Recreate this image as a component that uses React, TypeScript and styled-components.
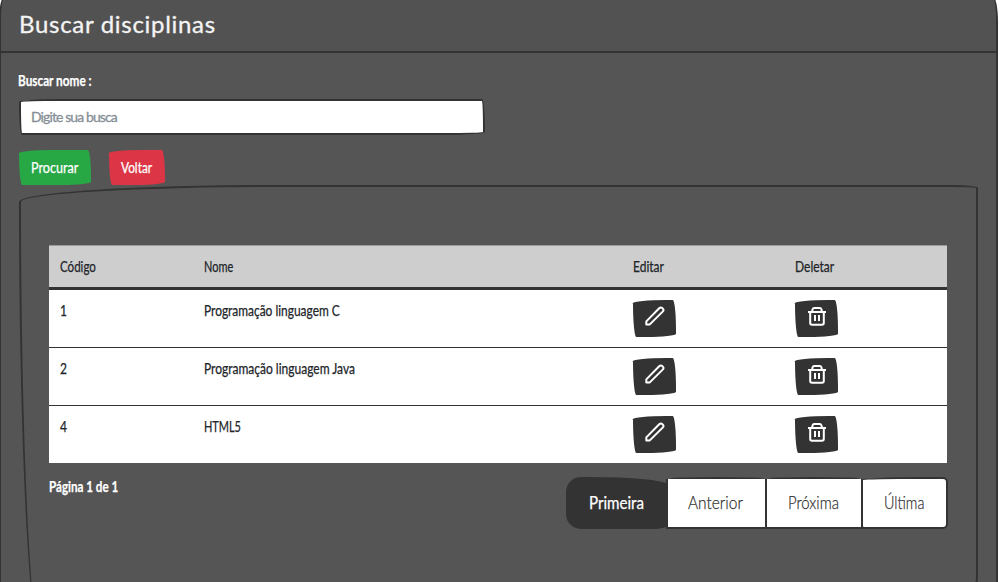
import React from "react";
import styled, { createGlobalStyle } from "styled-components";

const ink = "#333";
const wobble = "255px 25px 225px 25px / 25px 225px 25px 255px";

const GlobalStyle = createGlobalStyle`
  * { box-sizing: border-box; }
  html, body { margin: 0; background: #fff; }
  body { font-family: Lato, sans-serif; font-size: 16px; line-height: 24px; color: #212529; }
`;

const Viewport = styled.div`
  height: 582px;
  overflow: hidden;
`;

/* Narrow lettering: the glyphs are squeezed inside a box of the final width. */
const Label = styled.span<{ $w: number; $x?: number; $size?: number; $bold?: boolean }>`
  display: block;
  flex: none;
  width: ${(p) => p.$w}px;
  font-size: ${(p) => p.$size ?? 15}px;
  ${(p) => (p.$bold ? "font-weight: 700;" : "")}
  white-space: nowrap;
  -webkit-text-stroke: 0.25px currentColor;
  transform: translateY(-1px) scaleX(${(p) => p.$x ?? 0.8});
  transform-origin: left center;
`;

const Card = styled.main`
  width: 999px;
  height: 700px;
  margin: -3px 0 0 -1px;
  border: 2px solid ${ink};
  border-radius: 5px 5px 5px 5px / 25px 25px 25px 5px;
  background: #555;
  overflow: hidden;
`;

const Header = styled.header`
  height: 54px;
  padding: 11px 18px 0;
  border-bottom: 2px solid ${ink};
  background: #525252;
`;

const Title = styled.h1`
  margin: 0;
  color: #f4f4f4;
  font-size: 24px;
  line-height: 28px;
  font-weight: 400;
  letter-spacing: 0.7px;
  -webkit-text-stroke: 0.3px #f4f4f4;
`;

const Body = styled.div`
  padding: 16px 18px 0 17px;
  color: #fff;
`;

const SearchInput = styled.input`
  display: block;
  width: 466px;
  height: 36px;
  margin: 6px 0 15px 1px;
  padding: 0 10px 1px;
  border: 2px solid ${ink};
  border-radius: 40px 3px 40px 3px / 3px 30px 3px 30px;
  background: #fff;
  font: 14px Lato, sans-serif;
  letter-spacing: -0.9px;
  color: ${ink};
  &::placeholder { color: #868e96; opacity: 1; -webkit-text-stroke: 0.3px #868e96; }
`;

const Actions = styled.div`
  display: flex;
  gap: 18px;
  padding-left: 1px;
`;

const Button = styled.button<{ $bg: string; $w: number; $h?: number }>`
  display: flex;
  justify-content: flex-start;
  align-items: center;
  width: ${(p) => p.$w}px;
  height: ${(p) => p.$h ?? 35}px;
  padding: 0 0 0 12px;
  border: 0;
  border-radius: ${wobble};
  background: ${(p) => p.$bg};
  color: #fff;
  font-family: inherit;
`;

const Panel = styled.section`
  height: 472px;
  margin-left: 1px;
  padding: 58px 29px 0 28px;
  border: 2px solid ${ink};
  border-radius: 255px 25px 225px 25px / 17px 3px 80px 455px;
`;

const Table = styled.div`
  color: #212529;
  background: #fff;
`;

const columns = "144px 429px 162px 1fr";

const HeadRow = styled.div`
  display: grid;
  grid-template-columns: ${columns};
  height: 45px;
  padding: 9px 0 0 11px;
  border-top: 1px solid #999;
  border-bottom: 3px solid ${ink};
  background: #cecece;
`;

const Row = styled.div`
  display: grid;
  grid-template-columns: ${columns};
  height: 58px;
  padding: 10px 0 0 11px;
  border-bottom: 1px solid ${ink};
  &:last-child { height: 57px; border-bottom: 0; }
  & > span { margin-top: -1px; }
`;

const IconSvg = styled.svg`
  display: block;
  margin-bottom: 5px;
`;

const Footer = styled.footer`
  display: flex;
  justify-content: space-between;
  align-items: flex-start;
  padding-top: 12px;
`;

const Pager = styled.nav`
  display: flex;
  margin: 2px -1px 0 0;
`;

const PageLink = styled.button<{ $w: number; $active?: boolean; $r: string; $pad: number }>`
  display: flex;
  align-items: center;
  width: ${(p) => p.$w}px;
  height: 52px;
  margin-right: -2px;
  padding: 0 0 0 ${(p) => p.$pad}px;
  border: 2px solid ${ink};
  border-radius: ${(p) => p.$r};
  background: ${(p) => (p.$active ? ink : "#fff")};
  color: ${(p) => (p.$active ? "#fff" : ink)};
  font-family: inherit;
  font-weight: ${(p) => (p.$active ? 400 : 300)};
  &:last-child { margin-right: 0; }
`;

const Pencil = () => (
  <IconSvg width="20" height="20" viewBox="0 0 20 20" fill="none" stroke="#fff" strokeWidth="2" strokeLinejoin="round">
    <path d="M1.3 18.4V15.4L14.2 2.3Q15.8.8 17.2 2L17.8 2.6Q19.2 4 17.7 5.6L4.8 18.4Z" />
  </IconSvg>
);

const Trash = () => (
  <IconSvg width="20" height="20" viewBox="0 0 20 20" fill="none" stroke="#fff" strokeWidth="2" strokeLinejoin="round">
    <path d="M1 6H19M5 6L5.6 3.2Q6 2 7.2 2H12.8Q14 2 14.4 3.2L15 6M3.2 6V17Q3.2 18.8 5 18.8H15Q16.8 18.8 16.8 17V6M8 9V15M12 9V15" />
  </IconSvg>
);

const rows: { code: string; name: string; w: number; x: number }[] = [
  { code: "1", name: "Programação linguagem C", w: 137, x: 0.795 },
  { code: "2", name: "Programação linguagem Java", w: 151, x: 0.8 },
  { code: "4", name: "HTML5", w: 37, x: 0.73 },
];

export default function App() {
  return (
    <Viewport>
      <GlobalStyle />
      <Card>
        <Header>
          <Title>Buscar disciplinas</Title>
        </Header>
        <Body>
          <Label as="label" $w={75} $x={0.785} $bold>Buscar nome :</Label>
          <SearchInput placeholder="Digite sua busca" />
          <Actions>
            <Button $bg="#28a745" $w={72}><Label $w={48} $x={0.84}>Procurar</Label></Button>
            <Button $bg="#dc3545" $w={56}><Label $w={32} $x={0.79}>Voltar</Label></Button>
          </Actions>
          <Panel>
            <Table>
              <HeadRow>
                <Label $w={36} $x={0.77}>Código</Label>
                <Label $w={29} $x={0.73}>Nome</Label>
                <Label $w={31}>Editar</Label>
                <Label $w={39}>Deletar</Label>
              </HeadRow>
              {rows.map((r) => (
                <Row key={r.code}>
                  <Label $w={8}>{r.code}</Label>
                  <Label $w={r.w} $x={r.x}>{r.name}</Label>
                  <Button $bg={ink} $w={43} $h={37} aria-label="Editar"><Pencil /></Button>
                  <Button $bg={ink} $w={43} $h={37} aria-label="Deletar"><Trash /></Button>
                </Row>
              ))}
            </Table>
            <Footer>
              <Label $w={70} $x={0.775} $bold>Página 1 de 1</Label>
              <Pager>
                <PageLink $w={102} $active $pad={21} $r="15px 80px 15px 15px / 15px 8px 4px 15px"><Label $w={55} $x={0.84} $size={18}>Primeira</Label></PageLink>
                <PageLink $w={101} $pad={20} $r="50% 50% 0 0 / 2px 2px 0 0"><Label $w={55} $x={0.86} $size={18}>Anterior</Label></PageLink>
                <PageLink $w={98} $pad={21} $r="50% 50% 0 0 / 2px 2px 0 0"><Label $w={52} $x={0.83} $size={18}>Próxima</Label></PageLink>
                <PageLink $w={87} $pad={21} $r="60px 5px 5px 3px / 3px 5px 5px 3px"><Label $w={40} $size={18}>Última</Label></PageLink>
              </Pager>
            </Footer>
          </Panel>
        </Body>
      </Card>
    </Viewport>
  );
}
